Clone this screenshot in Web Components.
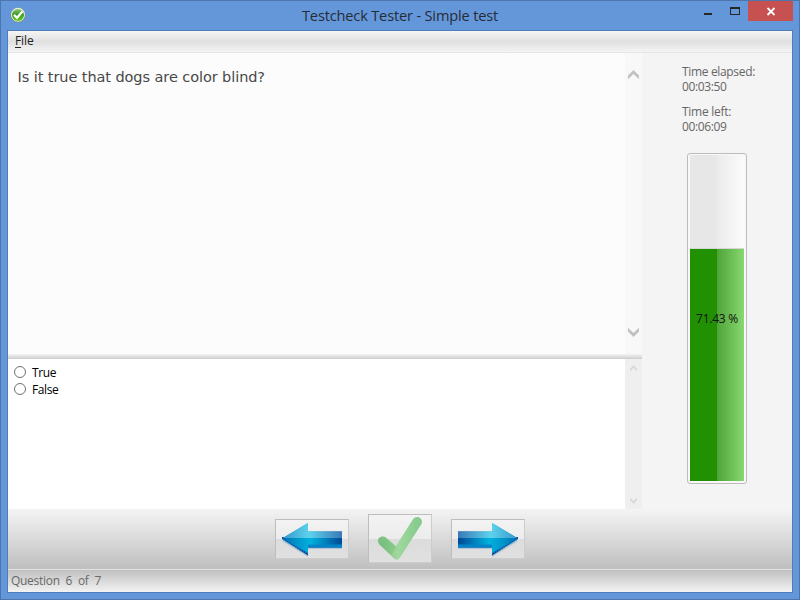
<!DOCTYPE html>
<html lang="en">
<head>
<meta charset="utf-8">
<title>Testcheck Tester - Simple test</title>
<style>
html,body{margin:0;width:800px;height:600px;overflow:hidden;font-family:"Open Sans","Noto Sans",sans-serif;font-size:12px}
</style>
</head>
<body>
<app-window></app-window>
<script>
function define(name, html, init) {
  const t = document.createElement('template');
  t.innerHTML = html;
  customElements.define(name, class extends HTMLElement {
    connectedCallback() {
      if (this.shadowRoot) return;
      this.attachShadow({mode: 'open'}).append(t.content.cloneNode(true));
      if (init) init.call(this, this.shadowRoot);
    }
  });
}

/* A single line of text, tracked to occupy the width given in "w". */
define('fit-text', `<style>:host{display:block;white-space:nowrap;width:max-content}</style><span><slot></slot></span>`, function (r) {
  const w = parseFloat(this.getAttribute('w'));
  const s = r.querySelector('span');
  const n = this.textContent.length;
  s.style.letterSpacing = ((w - s.getBoundingClientRect().width) / n) + 'px';
});

define('title-bar', `<style>
:host{display:flex;height:29px;position:relative}
.app{width:16px;height:16px;margin:6px 0 0 9px}
.name{flex:1;display:flex;justify-content:center;font-size:14.6px;line-height:20px;color:#262c36;padding-top:4px;padding-left:80px}
.ctl{display:flex;height:20px;margin-right:4px}
</style>
<svg class="app" viewBox="0 0 16 16"><defs><linearGradient id="g" x1="0" y1="0" x2="0" y2="1"><stop offset="0" stop-color="#8ec878"/><stop offset=".45" stop-color="#359b20"/><stop offset="1" stop-color="#65ce1d"/></linearGradient></defs>
<circle cx="8" cy="8" r="7.5" fill="#7b8979"/><circle cx="8" cy="7.7" r="7" fill="#e8eee4"/><circle cx="8" cy="8" r="6" fill="url(#g)"/><path d="M4 7.8 7 10.8 12.4 4.6" fill="none" stroke="#fff" stroke-width="2.3"/></svg>
<div class="name"><fit-text w="196">Testcheck Tester - Simple test</fit-text></div>
<svg class="ctl" width="101" height="20" shape-rendering="crispEdges"><rect x="54" width="45" height="20" fill="#c75050"/><rect x="10" y="12" width="8" height="2" fill="#262626"/><path fill="#262626" fill-rule="evenodd" d="M36 6h10v8H36zM37 8h8v5h-8z"/><path shape-rendering="auto" d="m73.500 7 7 7m0-7-7 7" stroke="#fff" stroke-width="1.8"/></svg>`);

define('menu-bar', `<style>
:host{display:block;height:21px;background:linear-gradient(#f5f5f5 0,#e0e0e0 50%,#f4f4f4 100%);border-bottom:1px solid #e6e6e6;color:#222}
fit-text{margin-left:7px;line-height:20px;font-size:12px}
u{text-underline-offset:2px;text-decoration-thickness:1px}
</style><fit-text w="18.5"><u>F</u>ile</fit-text>`);

define('scroll-bar', `<style>
:host{width:17px;flex:none;display:flex;flex-direction:column;justify-content:space-between;align-items:center;box-sizing:border-box;background:#f8f8f8;padding:17px 0;color:#c1c1c1}
:host([small]){background:#efefef;color:#d8d8d8;padding:6px 0 5px}
svg{display:block;width:11px;height:10px}
:host([small]) svg{width:7px;height:7px}
</style>
<svg viewBox="0 0 11 10" preserveAspectRatio="none"><path d="M0 5.6 5.5 0 11 5.6V9.3L5.5 4 0 9.3z" fill="currentColor"/></svg>
<svg viewBox="0 0 11 10" preserveAspectRatio="none"><path d="M0 4.4 5.5 10 11 4.4V.7L5.5 6 0 .7z" fill="currentColor"/></svg>`);

define('question-pane', `<style>
:host{display:flex;height:301px;background:#fcfcfc}
.q{flex:1;padding:13px 0 0 9.5px;font:14.5px/22px "DejaVu Sans",sans-serif;color:#484848}
</style><div class="q"><fit-text w="247.5">Is it true that dogs are color blind?</fit-text></div><scroll-bar></scroll-bar>`);

define('radio-option', `<style>
:host{display:flex;height:17px;align-items:center;gap:6px;color:#000;font-size:12px}
i{width:10px;height:10px;border:1px solid #707070;border-radius:50%;background:#fff;margin-top:-1px}
</style><i></i><slot></slot>`);

define('answer-pane', `<style>
:host{display:flex;height:150px;background:#fff}
.list{flex:1;padding:5px 0 0 6px}
</style><div class="list"><slot></slot></div><scroll-bar small></scroll-bar>`);

define('progress-column', `<style>
:host{display:block;box-sizing:border-box;width:60px;height:331px;border:1px solid #bcbcbc;border-radius:3px;padding:1px 2px 2px;background:#f8f8f8}
.track{height:100%;display:flex;flex-direction:column;justify-content:flex-end;position:relative;background:linear-gradient(90deg,#e7e7e7 0 27px,#ebebeb 27px,#fbfbfb 100%)}
.fill{height:232px;border-top:1px solid #d5d5d5;background:linear-gradient(90deg,#219003 0 27px,#4fa437 27px,#87d870 100%)}
.label{position:absolute;left:6px;top:155px;line-height:18px;color:#111}
</style><div class="track"><div class="fill"></div><fit-text class="label" w="42">71.43 %</fit-text></div>`);

define('side-panel', `<style>
:host{display:block;width:150px;background:#f4f4f4;color:#666;font-size:12px;line-height:15px}
.times{padding:11px 0 0 40px;height:89px;box-sizing:content-box}
.gap{height:10px}
progress-column{margin-left:45px}
</style><div class="times"><fit-text w="73">Time elapsed:</fit-text><fit-text w="44.5">00:03:50</fit-text><div class="gap"></div><fit-text w="49">Time left:</fit-text><fit-text w="44.5">00:06:09</fit-text></div><progress-column></progress-column>`);

define('tool-button', `<style>
:host{display:block;box-sizing:border-box;width:74px;height:40px;border:1px solid #bdbdbd;border-right-color:#ccc;border-bottom-color:#ccc;background:linear-gradient(#f3f3f3,#ececec 50%,#dcdcdc 50%,#e0e0e0)}
:host([check]){width:64px;height:49px}
</style><slot></slot>`);

define('arrow-icon', `<style>:host{display:block}:host([right]){transform:scaleX(-1)}svg{display:block}</style>
<svg width="72" height="38"><defs>
<linearGradient id="b" x1="6" x2="66" gradientUnits="userSpaceOnUse"><stop offset="0" stop-color="#0068b4"/><stop offset=".2" stop-color="#008dc6"/><stop offset=".48" stop-color="#00b2dd"/><stop offset="1" stop-color="#004896"/></linearGradient>
<linearGradient id="t" x1="6" x2="66" gradientUnits="userSpaceOnUse"><stop offset="0" stop-color="#3497cc"/><stop offset=".45" stop-color="#5ed2ed"/><stop offset="1" stop-color="#3a79b7"/></linearGradient>
<clipPath id="c"><path d="M0 0h72v18H0z"/></clipPath></defs>
<path d="M6 21 32 37V29h34v-4H32z" fill="#79a9d4" opacity=".5"/>
<path d="M6 19 32 35.5V27.5h34V17H6z" fill="#004391"/>
<path d="M32 24h34v3.5H32z" fill="#0086c8"/>
<path d="M6 18.5 32 3v8.5h34v13H32V33z" fill="url(#b)"/>
<path d="M6 18.5 32 3v8.5h34v13H32V33z" fill="url(#t)" clip-path="url(#c)"/>
<path d="M7 20 32 33.5" stroke="#35a7d8" stroke-width=".8" stroke-dasharray="1.5 1"/></svg>`);

define('check-icon', `<style>:host{display:block}svg{display:block}</style>
<svg width="62" height="47"><defs><linearGradient id="k" x1="0" x2="1"><stop offset="0" stop-color="#77bc7d"/><stop offset=".45" stop-color="#a0d89d"/><stop offset="1" stop-color="#83c98b"/></linearGradient></defs>
<path d="M9 26C9 21.5 15 20 18 23.500L27 31 43.500 5C46-.5 55 2 52.500 9L32 41Q28 48 23.500 42L11 30Q9 28 9 26Z" fill="url(#k)"/>
<path d="M10 29 17.500 23.500 27 32 22 40Z" fill="#63b66b" opacity=".3"/></svg>`);

define('tool-bar', `<style>
:host{display:flex;height:60px;justify-content:center;align-items:center;background:linear-gradient(#f4f4f4,#bfbfbf)}
.row{display:flex;align-items:center;gap:19px;padding-bottom:1px}
</style><div class="row"><tool-button><arrow-icon></arrow-icon></tool-button><tool-button check><check-icon></check-icon></tool-button><tool-button><arrow-icon right></arrow-icon></tool-button></div>`);

define('status-bar', `<style>
:host{display:block;height:22px;border-top:1px solid #e1e1e1;background:linear-gradient(#bfbfbf,#f3f3f3);color:#686868}
fit-text{margin-left:3px;line-height:21px;font-size:12px;word-spacing:3px}
</style><fit-text w="90">Question 6 of 7</fit-text>`);

define('app-window', `<style>
:host{display:block;box-sizing:border-box;width:800px;height:600px;background:#6497da;border:1px solid #4c76ad}
.client{box-sizing:border-box;margin:0 6px;width:786px;height:563px;border:1px solid #4e7dbb;display:flex;flex-direction:column}
.main{display:flex;height:456px}
.left{width:634px;display:flex;flex-direction:column}
.split{height:5px;background:linear-gradient(#f3f3f3,#cdcdcd)}
</style>
<title-bar></title-bar>
<div class="client"><menu-bar></menu-bar>
<div class="main"><div class="left"><question-pane></question-pane><div class="split"></div><answer-pane><radio-option><fit-text w="24">True</fit-text></radio-option><radio-option><fit-text w="26.5">False</fit-text></radio-option></answer-pane></div><side-panel></side-panel></div>
<tool-bar></tool-bar><status-bar></status-bar></div>`);
</script>
</body>
</html>
